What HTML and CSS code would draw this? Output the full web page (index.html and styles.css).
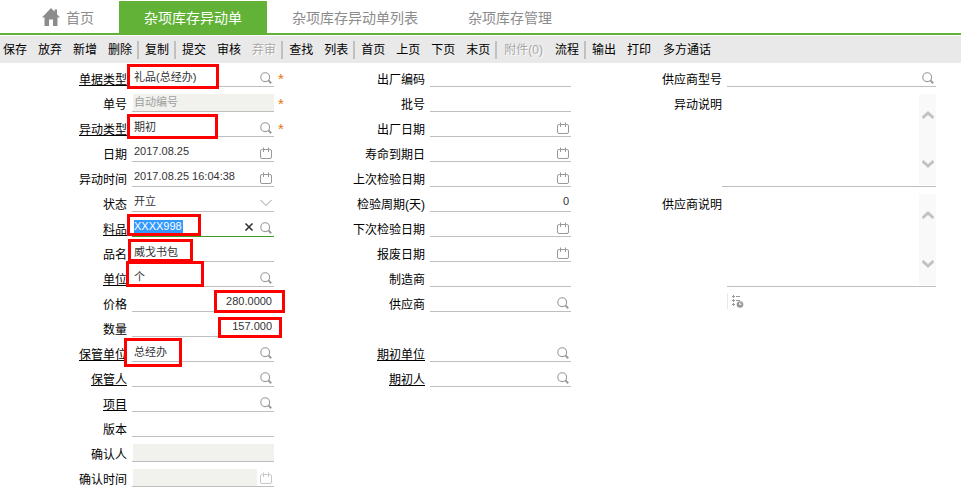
FILE: index.html
```html
<!DOCTYPE html>
<html lang="zh-CN">
<head>
<meta charset="utf-8">
<title>杂项库存异动单</title>
<link rel="stylesheet" href="styles.css">
</head>
<body>
<svg class="sprite" aria-hidden="true">
  <symbol id="search" viewBox="0 0 12 12"><circle cx="5.2" cy="5.2" r="4.4" fill="none" stroke="currentColor" stroke-width="1.1"/><path d="M8.4 8.4 11.2 11.2" stroke="currentColor" stroke-width="2"/></symbol>
  <symbol id="calendar" viewBox="0 0 12 12"><path d="M2.5 2.5H2Q.5 2.5 .5 4V10Q.5 11.500 2 11.500H10Q11.500 11.500 11.500 10V4Q11.500 2.500 10 2.500H9.500M3.500 .5V5M8.500 .5V5M2.500 2.500H9.500" fill="none" stroke="currentColor"/></symbol>
  <symbol id="down" viewBox="0 0 12 12"><path d="M.5 3 6 8.500 11.500 3" fill="none" stroke="currentColor"/></symbol>
  <symbol id="clear" viewBox="0 0 12 12"><path d="M2.500 2.500 9.500 9.500M9.500 2.500 2.500 9.500" stroke="currentColor" stroke-width="1.600"/></symbol>
  <symbol id="arrow" viewBox="0 0 12 10"><path d="M.5 8 6 3 11.500 8" fill="none" stroke="currentColor" stroke-width="3"/></symbol>
</svg>

<nav class="tabs">
  <a class="tab home" href="#"><svg class="home-icon" viewBox="0 0 18 18"><path d="M9 0 0 9.500H2.500V18H7V11.500H11V18H15.500V9.500H18L15 6.300V1.500H12.500V3.700Z" fill="currentColor"/></svg>首页</a>
  <a class="tab active" href="#" aria-current="page">杂项库存异动单</a>
  <a class="tab" href="#">杂项库存异动单列表</a>
  <a class="tab" href="#">杂项库存管理</a>
</nav>

<div class="toolbar" role="toolbar">
  <div class="group"><button>保存</button><button>放弃</button><button>新增</button><button>删除</button></div>
  <div class="group"><button>复制</button></div>
  <div class="group"><button>提交</button><button>审核</button><button disabled>弃审</button></div>
  <div class="group"><button>查找</button><button>列表</button></div>
  <div class="group"><button>首页</button><button>上页</button><button>下页</button><button>末页</button></div>
  <div class="group"><button class="wide" disabled>附件(0)</button><button>流程</button></div>
  <div class="group"><button>输出</button><button>打印</button><button class="wide">多方通话</button></div>
</div>

<form class="form">
  <div class="column">
    <div class="row"><label class="link" for="doc-type">单据类型</label><div class="field"><input id="doc-type" value="礼品(总经办)"><svg class="icon"><use href="#search"/></svg><i class="mark mark-doc"></i></div><span class="required">*</span></div>
    <div class="row"><label for="doc-no">单号</label><div class="field locked"><input id="doc-no" value="自动编号" disabled></div><span class="required">*</span></div>
    <div class="row"><label class="link" for="move-type">异动类型</label><div class="field"><input id="move-type" value="期初"><svg class="icon"><use href="#search"/></svg><i class="mark mark-move"></i></div><span class="required">*</span></div>
    <div class="row"><label for="date">日期</label><div class="field"><input id="date" value="2017.08.25"><svg class="icon"><use href="#calendar"/></svg></div></div>
    <div class="row"><label for="move-time">异动时间</label><div class="field"><input id="move-time" value="2017.08.25 16:04:38"><svg class="icon"><use href="#calendar"/></svg></div></div>
    <div class="row"><label for="status">状态</label><div class="field"><select id="status"><option>开立</option></select><svg class="icon"><use href="#down"/></svg></div></div>
    <div class="row"><label class="link" for="item">料品</label><div class="field focused"><input class="selected" id="item" value="XXXX998"><button class="clear" type="button" aria-label="清除"><svg class="icon"><use href="#clear"/></svg></button><svg class="icon"><use href="#search"/></svg><i class="mark mark-item"></i></div></div>
    <div class="row"><label for="name">品名</label><div class="field"><input id="name" value="威戈书包"><i class="mark mark-name"></i></div></div>
    <div class="row"><label class="link" for="unit">单位</label><div class="field"><input id="unit" value="个"><svg class="icon"><use href="#search"/></svg><i class="mark mark-unit"></i></div></div>
    <div class="row"><label for="price">价格</label><div class="field number"><input id="price" value="280.0000"><i class="mark mark-price"></i></div></div>
    <div class="row"><label for="quantity">数量</label><div class="field number"><input id="quantity" value="157.000"><i class="mark mark-quantity"></i></div></div>
    <div class="row"><label class="link" for="keep-dept">保管单位</label><div class="field"><input id="keep-dept" value="总经办"><svg class="icon"><use href="#search"/></svg><i class="mark mark-dept"></i></div></div>
    <div class="row"><label class="link" for="keeper">保管人</label><div class="field"><input id="keeper"><svg class="icon"><use href="#search"/></svg></div></div>
    <div class="row"><label class="link" for="project">项目</label><div class="field"><input id="project"><svg class="icon"><use href="#search"/></svg></div></div>
    <div class="row"><label for="version">版本</label><div class="field"><input id="version"></div></div>
    <div class="row"><label for="confirmer">确认人</label><div class="field locked"><input id="confirmer" disabled></div></div>
    <div class="row"><label for="confirm-time">确认时间</label><div class="field locked"><input id="confirm-time" disabled><svg class="icon"><use href="#calendar"/></svg></div></div>
  </div>

  <div class="column">
    <div class="row"><label for="factory-code">出厂编码</label><div class="field"><input id="factory-code"></div></div>
    <div class="row"><label for="batch">批号</label><div class="field"><input id="batch"></div></div>
    <div class="row"><label for="factory-date">出厂日期</label><div class="field"><input id="factory-date"><svg class="icon"><use href="#calendar"/></svg></div></div>
    <div class="row"><label for="expiry">寿命到期日</label><div class="field"><input id="expiry"><svg class="icon"><use href="#calendar"/></svg></div></div>
    <div class="row"><label for="last-check">上次检验日期</label><div class="field"><input id="last-check"><svg class="icon"><use href="#calendar"/></svg></div></div>
    <div class="row"><label for="cycle">检验周期(天)</label><div class="field number"><input id="cycle" value="0"></div></div>
    <div class="row"><label for="next-check">下次检验日期</label><div class="field"><input id="next-check"><svg class="icon"><use href="#calendar"/></svg></div></div>
    <div class="row"><label for="scrap">报废日期</label><div class="field"><input id="scrap"><svg class="icon"><use href="#calendar"/></svg></div></div>
    <div class="row"><label for="maker">制造商</label><div class="field"><input id="maker"></div></div>
    <div class="row"><label for="supplier">供应商</label><div class="field"><input id="supplier"><svg class="icon"><use href="#search"/></svg></div></div>
    <div class="row"></div>
    <div class="row"><label class="link" for="initial-dept">期初单位</label><div class="field"><input id="initial-dept"><svg class="icon"><use href="#search"/></svg></div></div>
    <div class="row"><label class="link" for="initial-person">期初人</label><div class="field"><input id="initial-person"><svg class="icon"><use href="#search"/></svg></div></div>
  </div>

  <div class="column">
    <div class="row"><label for="supplier-model">供应商型号</label><div class="field"><input id="supplier-model"><svg class="icon"><use href="#search"/></svg></div></div>
    <div class="row tall flush"><label for="move-note">异动说明</label><div class="field"><textarea id="move-note"></textarea><div class="scroll"><svg><use href="#arrow"/></svg><svg class="flip"><use href="#arrow"/></svg></div></div></div>
    <div class="row tall"><label for="supplier-note">供应商说明</label><div class="field"><textarea id="supplier-note"></textarea><div class="scroll"><svg><use href="#arrow"/></svg><svg class="flip"><use href="#arrow"/></svg></div></div></div>
    <div class="row extra"><button class="history" type="button" aria-label="记录"><svg viewBox="0 0 12 13"><path d="M0 1.500H3M1.500 0V3M0 5.500H3M1.500 4V7M0 9.500H3M1.500 8V11M4 1.500H8M4 5.500H8" stroke="#999" fill="none"/><circle cx="8" cy="9.500" r="3.300" fill="#999"/><path d="M7.800 7.500V9.700L9.500 9" stroke="#fff" fill="none"/></svg></button></div>
  </div>
</form>
</body>
</html>
```
FILE: styles.css
```css
* {
  box-sizing: border-box;
}

body {
  margin: 0;
  background: #fff;
  color: #000;
  font: 12px "Liberation Sans", "Noto Sans CJK SC", sans-serif;
}

.sprite {
  display: none;
}

.tabs {
  display: flex;
  height: 35px;
  padding: 1px 0 0 17px;
  border-bottom: 2px solid #61b236;
}

.tab {
  display: flex;
  align-items: center;
  padding: 0 25px;
  color: #8c8c8c;
  font-size: 14px;
  text-decoration: none;
  white-space: nowrap;
}

.tab.active {
  background: #61b236;
  color: #fff;
}

.home-icon {
  width: 18px;
  height: 18px;
  margin-right: 6px;
}

.toolbar {
  display: flex;
  align-items: center;
  height: 27px;
  margin-top: 1px;
  padding-left: 3px;
  background: #e9e9e9;
}

.group {
  display: flex;
  gap: 11px;
}

.group + .group {
  margin-left: 5px;
  padding-left: 6px;
  border-left: 2px solid #c0c0c0;
}

button {
  padding: 0;
  border: 0;
  background: none;
  color: #000;
  font: inherit;
  line-height: 18px;
  white-space: nowrap;
}

button:disabled {
  color: #a8a8a8;
  text-shadow: 1px 1px #fff;
}

.wide {
  padding: 0 1px;
}

.form {
  display: grid;
  grid-template-columns: 298fr 297fr 366fr;
  padding-top: 5px;
}

.column {
  min-width: 0;
}

.row {
  display: flex;
  align-items: flex-start;
  height: 25px;
  padding-right: 24px;
}

.column:last-child .row {
  padding-right: 25px;
}

label {
  width: 127px;
  flex: none;
  margin-right: 5px;
  line-height: 24px;
  text-align: right;
}

.link {
  text-decoration: underline;
}

.field {
  position: relative;
  display: flex;
  flex: 1;
  align-items: center;
  min-width: 0;
  height: 19px;
  padding-right: 2px;
  border-bottom: 1px solid #bfbfbf;
}

.field.focused {
  border-color: #3f9b28;
}

input,
select,
textarea {
  flex: 1;
  min-width: 0;
  height: 17px;
  margin: 0;
  padding: 0 0 2px 2px;
  border: 0;
  outline: 0;
  background: none;
  color: #333;
  font: 11px "Liberation Sans", "Noto Sans CJK SC", sans-serif;
  appearance: none;
  resize: none;
}

.number input {
  padding: 0 0 2px;
  text-align: right;
}

.locked {
  padding-right: 0;
}

.locked input {
  margin-left: 1px;
  padding-left: 1px;
  background: #f1f1ed;
  color: #a0a0a0;
}

.locked .icon {
  margin: 2px 2px 0 3px;
  color: #c8c8c8;
}

.selected {
  flex: none;
  width: 49px;
  height: 13px;
  margin: 0 0 2px 2px;
  padding: 0;
  background: #3399ff;
  color: #fff;
}

.icon {
  display: block;
  flex: none;
  width: 12px;
  height: 12px;
  margin-top: 2px;
  color: #999;
}

.clear {
  margin: 0 5px 0 auto;
}

.clear .icon {
  margin: 0;
  color: #333;
}

.required {
  width: 24px;
  margin-right: -24px;
  padding-left: 4px;
  color: #e8740c;
  font-size: 15px;
  line-height: 22px;
}

.mark {
  position: absolute;
  border: 3px solid #f00;
  pointer-events: none;
}

.mark-doc { left: -5px; top: -4px; width: 92px; height: 25px; }
.mark-move { left: -5px; top: -4px; width: 91px; height: 25px; }
.mark-item { left: -5px; top: -4px; width: 74px; height: 22px; }
.mark-name { left: -4px; top: -4px; width: 65px; height: 23px; }
.mark-unit { left: -6px; top: -7px; width: 78px; height: 26px; }
.mark-price { right: -11px; top: -3px; width: 71px; height: 23px; }
.mark-quantity { right: -8px; top: -1px; width: 64px; height: 21px; }
.mark-dept { left: -8px; top: -5px; width: 58px; height: 29px; }

.tall {
  height: 100px;
}

.tall .field {
  align-items: stretch;
  height: 94px;
  padding: 1px 0;
}

.tall textarea {
  height: auto;
}

.flush label {
  margin-right: 0;
}

.scroll {
  display: flex;
  flex-direction: column;
  align-items: center;
  justify-content: space-between;
  width: 17px;
  padding: 16px 0;
  background: #f9f9f9;
  color: #c2c2c2;
}

.scroll svg {
  width: 12px;
  height: 10px;
}

.flip {
  transform: rotate(180deg);
}

.extra {
  padding-left: 132px;
}

.history {
  height: 16px;
  padding-left: 4px;
  border-left: 1px solid #e8e8e8;
}

.history svg {
  display: block;
  width: 12px;
  height: 13px;
}
```
